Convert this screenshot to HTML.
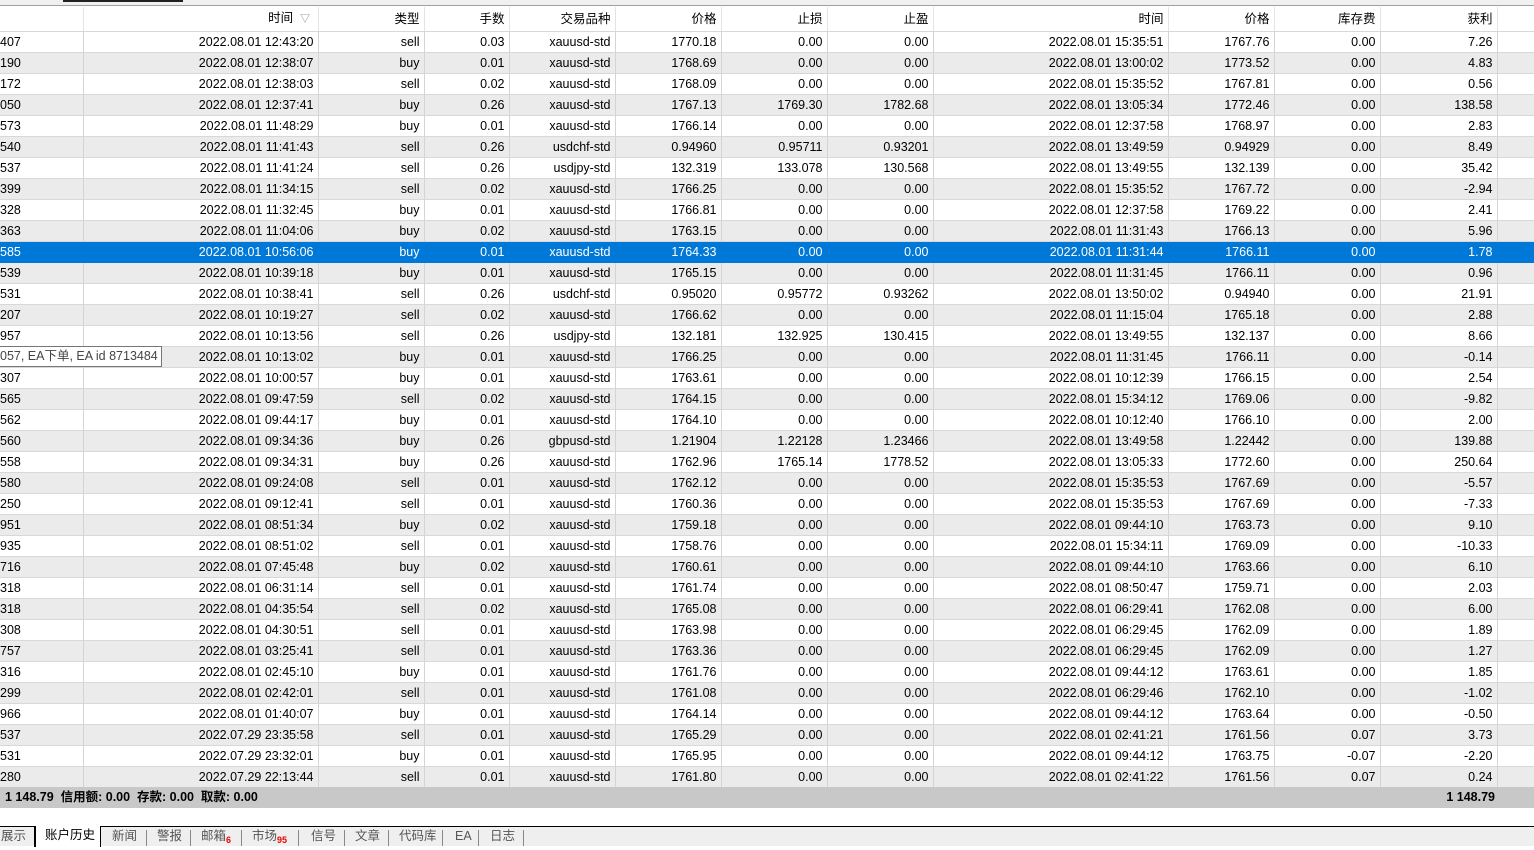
<!DOCTYPE html>
<html><head><meta charset="utf-8"><style>
*{margin:0;padding:0;box-sizing:border-box}
body{width:1534px;height:846px;overflow:hidden;background:#fff;font-family:"Liberation Sans","Noto Sans CJK SC",sans-serif;font-size:12.5px;color:#000;position:relative}
.top{position:absolute;left:0;top:0;width:1534px;height:6px;background:#f0f0f0;border-bottom:1px solid #a0a0a0}
.top i{position:absolute;left:63px;top:0;width:120px;height:2px;background:#222}
table{position:absolute;left:0;top:7px;border-collapse:collapse;table-layout:fixed;width:1534px}
td,th{height:21px;padding:0 4px 0 0;text-align:right;white-space:nowrap;overflow:hidden;border-right:1px solid #d4d4d4;border-bottom:1px solid #d8d8d8;font-weight:normal;line-height:20px}
th{height:24px;background:#fff;border-right:1px solid #e4e4e4}
td:first-child{text-align:left;padding-left:0}
tr:nth-child(odd) td{background:#ebebeb}
tr.s td{background:#0078d7!important;color:#fff;border-color:#0078d7}
.tot{position:absolute;left:0;top:787px;width:1534px;height:21px;background:#c8c8c8;font-weight:bold;line-height:21px}
.tot span{position:absolute}
.tip{position:absolute;left:0;top:346px;width:162px;height:21px;background:#fff;border:1px solid #767676;border-left:none;line-height:19px;padding-left:0;color:#444;font-size:12.5px}
.tabs{position:absolute;left:0;top:826px;width:1534px;height:20px;background:#efefef;border-top:1px solid #000}
.tab{position:absolute;top:0;height:20px;line-height:19px;color:#555;font-size:12.5px}
.tab.a{background:#fff;color:#000;top:-1px;height:21px;border-left:1px solid #000;border-right:1px solid #000}
.sep{position:absolute;top:3px;width:1px;height:16px;background:#888}
sub{color:#e00;font-size:9px;font-weight:bold;vertical-align:-3px}
</style></head><body>
<div class="top"><i></i></div>
<table>
<colgroup><col style="width:83px"><col style="width:235px"><col style="width:106px"><col style="width:85px"><col style="width:106px"><col style="width:106px"><col style="width:106px"><col style="width:106px"><col style="width:235px"><col style="width:106px"><col style="width:106px"><col style="width:117px"><col style="width:37px"></colgroup>
<tr><th></th><th>时间 &nbsp;<span style="color:#888;font-size:10px">▽</span>&nbsp;</th><th>类型</th><th>手数</th><th>交易品种</th><th>价格</th><th>止损</th><th>止盈</th><th>时间</th><th>价格</th><th>库存费</th><th>获利</th><th></th></tr>
<tr><td>407</td><td>2022.08.01 12:43:20</td><td>sell</td><td>0.03</td><td>xauusd-std</td><td>1770.18</td><td>0.00</td><td>0.00</td><td>2022.08.01 15:35:51</td><td>1767.76</td><td>0.00</td><td>7.26</td><td></td></tr>
<tr><td>190</td><td>2022.08.01 12:38:07</td><td>buy</td><td>0.01</td><td>xauusd-std</td><td>1768.69</td><td>0.00</td><td>0.00</td><td>2022.08.01 13:00:02</td><td>1773.52</td><td>0.00</td><td>4.83</td><td></td></tr>
<tr><td>172</td><td>2022.08.01 12:38:03</td><td>sell</td><td>0.02</td><td>xauusd-std</td><td>1768.09</td><td>0.00</td><td>0.00</td><td>2022.08.01 15:35:52</td><td>1767.81</td><td>0.00</td><td>0.56</td><td></td></tr>
<tr><td>050</td><td>2022.08.01 12:37:41</td><td>buy</td><td>0.26</td><td>xauusd-std</td><td>1767.13</td><td>1769.30</td><td>1782.68</td><td>2022.08.01 13:05:34</td><td>1772.46</td><td>0.00</td><td>138.58</td><td></td></tr>
<tr><td>573</td><td>2022.08.01 11:48:29</td><td>buy</td><td>0.01</td><td>xauusd-std</td><td>1766.14</td><td>0.00</td><td>0.00</td><td>2022.08.01 12:37:58</td><td>1768.97</td><td>0.00</td><td>2.83</td><td></td></tr>
<tr><td>540</td><td>2022.08.01 11:41:43</td><td>sell</td><td>0.26</td><td>usdchf-std</td><td>0.94960</td><td>0.95711</td><td>0.93201</td><td>2022.08.01 13:49:59</td><td>0.94929</td><td>0.00</td><td>8.49</td><td></td></tr>
<tr><td>537</td><td>2022.08.01 11:41:24</td><td>sell</td><td>0.26</td><td>usdjpy-std</td><td>132.319</td><td>133.078</td><td>130.568</td><td>2022.08.01 13:49:55</td><td>132.139</td><td>0.00</td><td>35.42</td><td></td></tr>
<tr><td>399</td><td>2022.08.01 11:34:15</td><td>sell</td><td>0.02</td><td>xauusd-std</td><td>1766.25</td><td>0.00</td><td>0.00</td><td>2022.08.01 15:35:52</td><td>1767.72</td><td>0.00</td><td>-2.94</td><td></td></tr>
<tr><td>328</td><td>2022.08.01 11:32:45</td><td>buy</td><td>0.01</td><td>xauusd-std</td><td>1766.81</td><td>0.00</td><td>0.00</td><td>2022.08.01 12:37:58</td><td>1769.22</td><td>0.00</td><td>2.41</td><td></td></tr>
<tr><td>363</td><td>2022.08.01 11:04:06</td><td>buy</td><td>0.02</td><td>xauusd-std</td><td>1763.15</td><td>0.00</td><td>0.00</td><td>2022.08.01 11:31:43</td><td>1766.13</td><td>0.00</td><td>5.96</td><td></td></tr>
<tr class="s"><td>585</td><td>2022.08.01 10:56:06</td><td>buy</td><td>0.01</td><td>xauusd-std</td><td>1764.33</td><td>0.00</td><td>0.00</td><td>2022.08.01 11:31:44</td><td>1766.11</td><td>0.00</td><td>1.78</td><td></td></tr>
<tr><td>539</td><td>2022.08.01 10:39:18</td><td>buy</td><td>0.01</td><td>xauusd-std</td><td>1765.15</td><td>0.00</td><td>0.00</td><td>2022.08.01 11:31:45</td><td>1766.11</td><td>0.00</td><td>0.96</td><td></td></tr>
<tr><td>531</td><td>2022.08.01 10:38:41</td><td>sell</td><td>0.26</td><td>usdchf-std</td><td>0.95020</td><td>0.95772</td><td>0.93262</td><td>2022.08.01 13:50:02</td><td>0.94940</td><td>0.00</td><td>21.91</td><td></td></tr>
<tr><td>207</td><td>2022.08.01 10:19:27</td><td>sell</td><td>0.02</td><td>xauusd-std</td><td>1766.62</td><td>0.00</td><td>0.00</td><td>2022.08.01 11:15:04</td><td>1765.18</td><td>0.00</td><td>2.88</td><td></td></tr>
<tr><td>957</td><td>2022.08.01 10:13:56</td><td>sell</td><td>0.26</td><td>usdjpy-std</td><td>132.181</td><td>132.925</td><td>130.415</td><td>2022.08.01 13:49:55</td><td>132.137</td><td>0.00</td><td>8.66</td><td></td></tr>
<tr><td></td><td>2022.08.01 10:13:02</td><td>buy</td><td>0.01</td><td>xauusd-std</td><td>1766.25</td><td>0.00</td><td>0.00</td><td>2022.08.01 11:31:45</td><td>1766.11</td><td>0.00</td><td>-0.14</td><td></td></tr>
<tr><td>307</td><td>2022.08.01 10:00:57</td><td>buy</td><td>0.01</td><td>xauusd-std</td><td>1763.61</td><td>0.00</td><td>0.00</td><td>2022.08.01 10:12:39</td><td>1766.15</td><td>0.00</td><td>2.54</td><td></td></tr>
<tr><td>565</td><td>2022.08.01 09:47:59</td><td>sell</td><td>0.02</td><td>xauusd-std</td><td>1764.15</td><td>0.00</td><td>0.00</td><td>2022.08.01 15:34:12</td><td>1769.06</td><td>0.00</td><td>-9.82</td><td></td></tr>
<tr><td>562</td><td>2022.08.01 09:44:17</td><td>buy</td><td>0.01</td><td>xauusd-std</td><td>1764.10</td><td>0.00</td><td>0.00</td><td>2022.08.01 10:12:40</td><td>1766.10</td><td>0.00</td><td>2.00</td><td></td></tr>
<tr><td>560</td><td>2022.08.01 09:34:36</td><td>buy</td><td>0.26</td><td>gbpusd-std</td><td>1.21904</td><td>1.22128</td><td>1.23466</td><td>2022.08.01 13:49:58</td><td>1.22442</td><td>0.00</td><td>139.88</td><td></td></tr>
<tr><td>558</td><td>2022.08.01 09:34:31</td><td>buy</td><td>0.26</td><td>xauusd-std</td><td>1762.96</td><td>1765.14</td><td>1778.52</td><td>2022.08.01 13:05:33</td><td>1772.60</td><td>0.00</td><td>250.64</td><td></td></tr>
<tr><td>580</td><td>2022.08.01 09:24:08</td><td>sell</td><td>0.01</td><td>xauusd-std</td><td>1762.12</td><td>0.00</td><td>0.00</td><td>2022.08.01 15:35:53</td><td>1767.69</td><td>0.00</td><td>-5.57</td><td></td></tr>
<tr><td>250</td><td>2022.08.01 09:12:41</td><td>sell</td><td>0.01</td><td>xauusd-std</td><td>1760.36</td><td>0.00</td><td>0.00</td><td>2022.08.01 15:35:53</td><td>1767.69</td><td>0.00</td><td>-7.33</td><td></td></tr>
<tr><td>951</td><td>2022.08.01 08:51:34</td><td>buy</td><td>0.02</td><td>xauusd-std</td><td>1759.18</td><td>0.00</td><td>0.00</td><td>2022.08.01 09:44:10</td><td>1763.73</td><td>0.00</td><td>9.10</td><td></td></tr>
<tr><td>935</td><td>2022.08.01 08:51:02</td><td>sell</td><td>0.01</td><td>xauusd-std</td><td>1758.76</td><td>0.00</td><td>0.00</td><td>2022.08.01 15:34:11</td><td>1769.09</td><td>0.00</td><td>-10.33</td><td></td></tr>
<tr><td>716</td><td>2022.08.01 07:45:48</td><td>buy</td><td>0.02</td><td>xauusd-std</td><td>1760.61</td><td>0.00</td><td>0.00</td><td>2022.08.01 09:44:10</td><td>1763.66</td><td>0.00</td><td>6.10</td><td></td></tr>
<tr><td>318</td><td>2022.08.01 06:31:14</td><td>sell</td><td>0.01</td><td>xauusd-std</td><td>1761.74</td><td>0.00</td><td>0.00</td><td>2022.08.01 08:50:47</td><td>1759.71</td><td>0.00</td><td>2.03</td><td></td></tr>
<tr><td>318</td><td>2022.08.01 04:35:54</td><td>sell</td><td>0.02</td><td>xauusd-std</td><td>1765.08</td><td>0.00</td><td>0.00</td><td>2022.08.01 06:29:41</td><td>1762.08</td><td>0.00</td><td>6.00</td><td></td></tr>
<tr><td>308</td><td>2022.08.01 04:30:51</td><td>sell</td><td>0.01</td><td>xauusd-std</td><td>1763.98</td><td>0.00</td><td>0.00</td><td>2022.08.01 06:29:45</td><td>1762.09</td><td>0.00</td><td>1.89</td><td></td></tr>
<tr><td>757</td><td>2022.08.01 03:25:41</td><td>sell</td><td>0.01</td><td>xauusd-std</td><td>1763.36</td><td>0.00</td><td>0.00</td><td>2022.08.01 06:29:45</td><td>1762.09</td><td>0.00</td><td>1.27</td><td></td></tr>
<tr><td>316</td><td>2022.08.01 02:45:10</td><td>buy</td><td>0.01</td><td>xauusd-std</td><td>1761.76</td><td>0.00</td><td>0.00</td><td>2022.08.01 09:44:12</td><td>1763.61</td><td>0.00</td><td>1.85</td><td></td></tr>
<tr><td>299</td><td>2022.08.01 02:42:01</td><td>sell</td><td>0.01</td><td>xauusd-std</td><td>1761.08</td><td>0.00</td><td>0.00</td><td>2022.08.01 06:29:46</td><td>1762.10</td><td>0.00</td><td>-1.02</td><td></td></tr>
<tr><td>966</td><td>2022.08.01 01:40:07</td><td>buy</td><td>0.01</td><td>xauusd-std</td><td>1764.14</td><td>0.00</td><td>0.00</td><td>2022.08.01 09:44:12</td><td>1763.64</td><td>0.00</td><td>-0.50</td><td></td></tr>
<tr><td>537</td><td>2022.07.29 23:35:58</td><td>sell</td><td>0.01</td><td>xauusd-std</td><td>1765.29</td><td>0.00</td><td>0.00</td><td>2022.08.01 02:41:21</td><td>1761.56</td><td>0.07</td><td>3.73</td><td></td></tr>
<tr><td>531</td><td>2022.07.29 23:32:01</td><td>buy</td><td>0.01</td><td>xauusd-std</td><td>1765.95</td><td>0.00</td><td>0.00</td><td>2022.08.01 09:44:12</td><td>1763.75</td><td>-0.07</td><td>-2.20</td><td></td></tr>
<tr><td>280</td><td>2022.07.29 22:13:44</td><td>sell</td><td>0.01</td><td>xauusd-std</td><td>1761.80</td><td>0.00</td><td>0.00</td><td>2022.08.01 02:41:22</td><td>1761.56</td><td>0.07</td><td>0.24</td><td></td></tr>
</table>
<div class="tip">057, EA下单, EA id 8713484</div>
<div class="tot"><span style="left:5px">1 148.79 &nbsp;信用额: 0.00 &nbsp;存款: 0.00 &nbsp;取款: 0.00</span><span style="right:39px">1 148.79</span></div>
<div class="tabs">
<div class="tab" style="left:0;width:35px;border-right:1px solid #000;padding-left:1px">展示</div>
<div class="tab a" style="left:35px;width:66px;padding-left:9px">账户历史</div>
<div class="tab" style="left:112px">新闻</div><div class="sep" style="left:146px"></div>
<div class="tab" style="left:157px">警报</div><div class="sep" style="left:190px"></div>
<div class="tab" style="left:201px">邮箱<sub>6</sub></div><div class="sep" style="left:241px"></div>
<div class="tab" style="left:252px">市场<sub>95</sub></div><div class="sep" style="left:298px"></div>
<div class="tab" style="left:311px">信号</div><div class="sep" style="left:344px"></div>
<div class="tab" style="left:355px">文章</div><div class="sep" style="left:388px"></div>
<div class="tab" style="left:399px">代码库</div><div class="sep" style="left:442px"></div>
<div class="tab" style="left:455px">EA</div><div class="sep" style="left:478px"></div>
<div class="tab" style="left:490px">日志</div><div class="sep" style="left:523px"></div>
</div>
</body></html>
